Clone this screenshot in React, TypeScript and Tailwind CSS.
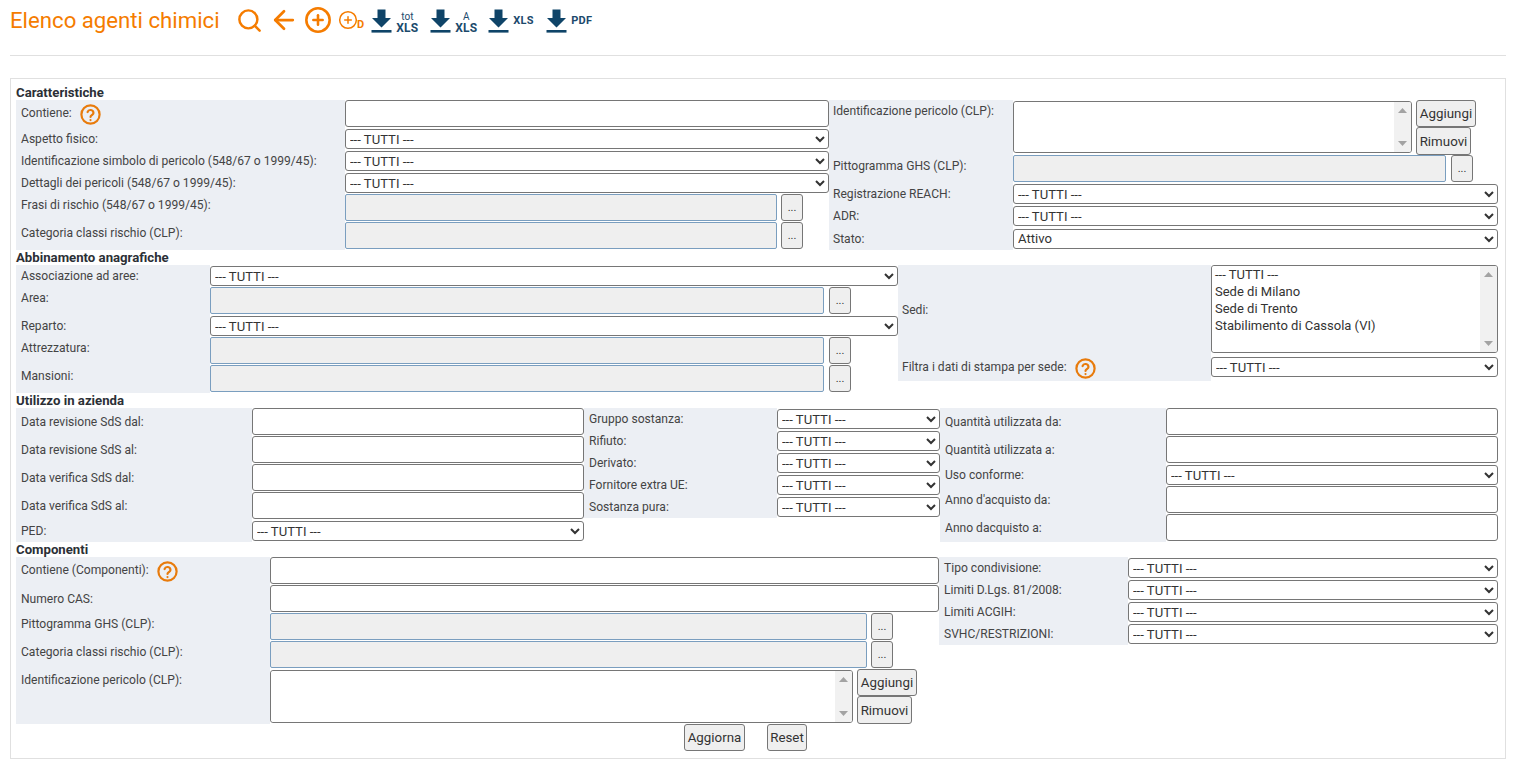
import React from "react";
import { Search, ArrowLeft, CirclePlus } from "lucide-react";

const inputCls = "block h-[27px] mb-[1px] border border-[#767676] rounded-[3px] bg-white";
const disabledCls = "block h-[27px] mb-[1px] border border-[#7a9ebf] rounded-[2px] bg-[#efefef]";
const selectCls = "block h-[20px] border border-[#767676] rounded-[3px] bg-white text-[#333] text-[13.1px] leading-[16px] pl-0";
const btnCls = "block bg-[#efefef] border border-[#767676] rounded-[3px] text-[#333] text-[13.33px] leading-[15px] p-0";

function Help() {
  return (
    <svg width="21" height="21" viewBox="0 0 24 24" fill="none" stroke="#e87b0c" strokeWidth="2.5" strokeLinecap="round" strokeLinejoin="round" className="shrink-0">
      <circle cx="12" cy="12" r="10.4" />
      <path d="M8.6 9.2a3.5 3.5 0 0 1 6.8 1c0 2.3-3.4 2.8-3.4 4.6" />
      <path d="M12 18.4h.01" />
    </svg>
  );
}

function Row({ h, lw, label, top, help, tight, children }: { h: string; lw: string; label: string; top?: boolean; help?: boolean; tight?: boolean; children: React.ReactNode }) {
  return (
    <div className={`flex ${h}`}>
      <div className={`${lw} shrink-0 bg-[#eceff4] ${tight ? "pl-[4px]" : "pl-[5px]"} text-[#444] text-[12.08px] leading-[14px] flex gap-[8px] ${top ? "items-start pt-[4px]" : "items-center"}`}>
        <span className={help ? "mb-[2px]" : ""}>{label}</span>
        {help && <Help />}
      </div>
      <div className="flex items-center min-w-0">{children}</div>
    </div>
  );
}

function Sel({ w, v = "--- TUTTI ---" }: { w: string; v?: string }) {
  return (
    <select className={`${selectCls} ${w}`} defaultValue={v}>
      <option>{v}</option>
    </select>
  );
}

function Dots() {
  return <button className={`${btnCls} w-[22px] h-[27px] mb-[1px] !text-[11px]`}>...</button>;
}

function Heading({ children }: { children: React.ReactNode }) {
  return <div className="h-[15px] text-[13.2px] leading-[15px] font-bold text-[#2b2f36]">{children}</div>;
}

function ScrollBar() {
  return (
    <div className="w-[17px] shrink-0 bg-[#f1f1f1] flex flex-col justify-between items-center py-[6px] rounded-r-[2px]">
      <svg width="9" height="5" viewBox="0 0 9 5" fill="#a3a3a3"><path d="M4.5 0 9 5H0z" /></svg>
      <svg width="9" height="5" viewBox="0 0 9 5" fill="#a3a3a3"><path d="M0 0h9L4.5 5z" /></svg>
    </div>
  );
}

function TextBox({ size }: { size: string }) {
  return (
    <div className={`flex border border-[#767676] rounded-[3px] bg-white ${size}`}>
      <textarea className="flex-1 min-w-0 resize-none outline-none bg-white rounded-l-[3px]" />
      <ScrollBar />
    </div>
  );
}

function Download({ top, bottom, small, w }: { top?: string; bottom: string; small?: boolean; w: string }) {
  return (
    <div className={`flex items-center mt-[2px] ${w}`}>
      <svg width="21" height="24" viewBox="0 0 21 24" className="shrink-0" fill="#0f4468">
        <path d="M6.5 0.5h8v8.5h5.5l-9.5 9.5-9.5-9.5h5.5z" />
        <rect x="0.5" y="21" width="20" height="2.6" />
      </svg>
      <div className={`flex flex-col items-center text-[#1c4a6c] ml-[4px] ${small ? "" : "mt-[3px]"}`}>
        {top && <span className="text-[10px] leading-[11px]">{top}</span>}
        <span className={`font-bold tracking-[0.3px] ${small ? "text-[11px] leading-[12px]" : "text-[12px] leading-[13px]"}`}>{bottom}</span>
      </div>
    </div>
  );
}

export default function App() {
  return (
    <div className="bg-white min-h-[763px] pl-[10px] pr-[9px] text-[12px]" style={{ fontFamily: "Roboto, 'Liberation Sans', sans-serif" }}>
      <div className="h-[56px] border-b border-[#e0e0e0] flex items-start pt-[7px]">
        <div className="text-[22.2px] leading-[26px] text-[#f57c00] w-[226px]">Elenco agenti chimici</div>
        <div className="flex items-center h-[26px]">
          <Search size={27} strokeWidth={2.2} color="#f57c00" />
          <ArrowLeft size={30} strokeWidth={2.2} color="#f57c00" className="ml-[6px]" />
          <CirclePlus size={28} strokeWidth={2.2} color="#f57c00" className="ml-[5px]" />
          <div className="flex items-end ml-[6px] text-[#f57c00]">
            <CirclePlus size={20} strokeWidth={1.8} color="#f57c00" />
            <span className="font-bold text-[11px] leading-[10px] -ml-[1px]">D</span>
          </div>
          <div className="ml-[7px] flex items-center">
            <Download top="tot" bottom="XLS" w="w-[59px]" />
            <Download top="A" bottom="XLS" w="w-[58px]" />
            <Download bottom="XLS" small w="w-[58px]" />
            <Download bottom="PDF" small w="w-[58px]" />
          </div>
        </div>
      </div>

      <div className="mt-[22px] border border-[#e0e0e0] pl-[5px] pt-[6px] pb-[7px] h-[681px]">
        <Heading>Caratteristiche</Heading>
        <div className="flex">
          <div className="w-[813px]">
            <Row h="h-[28px]" lw="w-[329px]" label="Contiene:" help><input className={`${inputCls} w-[484px]`} /></Row>
            <Row h="h-[22px]" lw="w-[329px]" label="Aspetto fisico:"><Sel w="w-[484px]" /></Row>
            <Row h="h-[22px]" lw="w-[329px]" label="Identificazione simbolo di pericolo (548/67 o 1999/45):"><Sel w="w-[484px]" /></Row>
            <Row h="h-[22px]" lw="w-[329px]" label="Dettagli dei pericoli (548/67 o 1999/45):"><Sel w="w-[484px]" /></Row>
            <Row h="h-[28px]" lw="w-[329px]" label="Frasi di rischio (548/67 o 1999/45):" top>
              <input disabled className={`${disabledCls} w-[432px]`} /><div className="ml-[4px]"><Dots /></div>
            </Row>
            <Row h="h-[28px]" lw="w-[329px]" label="Categoria classi rischio (CLP):" top>
              <input disabled className={`${disabledCls} w-[432px]`} /><div className="ml-[4px]"><Dots /></div>
            </Row>
          </div>
          <div>
            <Row tight h="h-[55px]" lw="w-[184px]" label="Identificazione pericolo (CLP):" top>
              <TextBox size="w-[399px] h-[52px] mb-[1px]" />
              <div className="ml-[4px] flex flex-col">
                <button className={`${btnCls} w-[60px] h-[27px]`}>Aggiungi</button>
                <button className={`${btnCls} w-[55px] h-[28px]`}>Rimuovi</button>
              </div>
            </Row>
            <Row tight h="h-[28px]" lw="w-[184px]" label="Pittogramma GHS (CLP):" top>
              <input disabled className={`${disabledCls} w-[433px]`} /><div className="ml-[5px]"><Dots /></div>
            </Row>
            <Row tight h="h-[22px]" lw="w-[184px]" label="Registrazione REACH:"><Sel w="w-[485px]" /></Row>
            <Row tight h="h-[22px]" lw="w-[184px]" label="ADR:"><Sel w="w-[485px]" /></Row>
            <Row tight h="h-[23px]" lw="w-[184px]" label="Stato:"><Sel w="w-[485px]" v="Attivo" /></Row>
          </div>
        </div>

        <Heading>Abbinamento anagrafiche</Heading>
        <div className="flex items-start">
          <div className="w-[882px]">
            <Row h="h-[22px]" lw="w-[194px]" label="Associazione ad aree:"><Sel w="w-[688px]" /></Row>
            <Row h="h-[28px]" lw="w-[194px]" label="Area:" top>
              <input disabled className={`${disabledCls} w-[614px]`} /><div className="ml-[5px]"><Dots /></div>
            </Row>
            <Row h="h-[22px]" lw="w-[194px]" label="Reparto:"><Sel w="w-[688px]" /></Row>
            <Row h="h-[28px]" lw="w-[194px]" label="Attrezzatura:" top>
              <input disabled className={`${disabledCls} w-[614px]`} /><div className="ml-[5px]"><Dots /></div>
            </Row>
            <Row h="h-[28px]" lw="w-[194px]" label="Mansioni:" top>
              <input disabled className={`${disabledCls} w-[614px]`} /><div className="ml-[5px]"><Dots /></div>
            </Row>
          </div>
          <div>
            <Row tight h="h-[90px]" lw="w-[313px]" label="Sedi:">
              <div className="h-[90px] pb-[2px]">
                <div className="flex w-[287px] h-[88px] border border-[#767676] rounded-[3px] bg-white">
                  <select multiple size={5} className="block flex-1 min-w-0 h-full pt-[1px] outline-none bg-white rounded-l-[3px] text-[#333] text-[13px] leading-[17px] overflow-hidden">
                    <option className="px-[3px] py-0 h-[17px]">--- TUTTI ---</option>
                    <option className="px-[3px] py-0 h-[17px]">Sede di Milano</option>
                    <option className="px-[3px] py-0 h-[17px]">Sede di Trento</option>
                    <option className="px-[3px] py-0 h-[17px]">Stabilimento di Cassola (VI)</option>
                  </select>
                  <ScrollBar />
                </div>
              </div>
            </Row>
            <Row tight h="h-[26px]" lw="w-[313px]" label="Filtra i dati di stampa per sede:" help>
              <div className="pb-[2px]"><Sel w="w-[287px]" /></div>
            </Row>
          </div>
        </div>

        <Heading>Utilizzo in azienda</Heading>
        <div className="flex items-start">
          <div className="w-[568px]">
            <Row h="h-[28px]" lw="w-[236px]" label="Data revisione SdS dal:"><input className={`${inputCls} w-[332px]`} /></Row>
            <Row h="h-[28px]" lw="w-[236px]" label="Data revisione SdS al:"><input className={`${inputCls} w-[332px]`} /></Row>
            <Row h="h-[28px]" lw="w-[236px]" label="Data verifica SdS dal:"><input className={`${inputCls} w-[332px]`} /></Row>
            <Row h="h-[28px]" lw="w-[236px]" label="Data verifica SdS al:"><input className={`${inputCls} w-[332px]`} /></Row>
            <Row h="h-[22px]" lw="w-[236px]" label="PED:"><Sel w="w-[332px]" /></Row>
          </div>
          <div className="w-[356px]">
            <Row h="h-[22px]" lw="w-[193px]" label="Gruppo sostanza:"><Sel w="w-[163px]" /></Row>
            <Row h="h-[22px]" lw="w-[193px]" label="Rifiuto:"><Sel w="w-[163px]" /></Row>
            <Row h="h-[22px]" lw="w-[193px]" label="Derivato:"><Sel w="w-[163px]" /></Row>
            <Row h="h-[22px]" lw="w-[193px]" label="Fornitore extra UE:"><Sel w="w-[163px]" /></Row>
            <Row h="h-[22px]" lw="w-[193px]" label="Sostanza pura:"><Sel w="w-[163px]" /></Row>
          </div>
          <div>
            <Row h="h-[28px]" lw="w-[226px]" label="Quantità utilizzata da:"><input className={`${inputCls} w-[332px]`} /></Row>
            <Row h="h-[28px]" lw="w-[226px]" label="Quantità utilizzata a:"><input className={`${inputCls} w-[332px]`} /></Row>
            <Row h="h-[22px]" lw="w-[226px]" label="Uso conforme:"><Sel w="w-[332px]" /></Row>
            <Row h="h-[28px]" lw="w-[226px]" label="Anno d'acquisto da:"><input className={`${inputCls} w-[332px]`} /></Row>
            <Row h="h-[28px]" lw="w-[226px]" label="Anno dacquisto a:"><input className={`${inputCls} w-[332px]`} /></Row>
          </div>
        </div>

        <Heading>Componenti</Heading>
        <div className="flex items-start">
          <div className="w-[923px]">
            <Row h="h-[28px]" lw="w-[254px]" label="Contiene (Componenti):" help><input className={`${inputCls} w-[669px]`} /></Row>
            <Row h="h-[28px]" lw="w-[254px]" label="Numero CAS:"><input className={`${inputCls} w-[669px]`} /></Row>
            <Row h="h-[28px]" lw="w-[254px]" label="Pittogramma GHS (CLP):" top>
              <input disabled className={`${disabledCls} w-[597px]`} /><div className="ml-[4px]"><Dots /></div>
            </Row>
            <Row h="h-[28px]" lw="w-[254px]" label="Categoria classi rischio (CLP):" top>
              <input disabled className={`${disabledCls} w-[597px]`} /><div className="ml-[4px]"><Dots /></div>
            </Row>
            <Row h="h-[55px]" lw="w-[254px]" label="Identificazione pericolo (CLP):" top>
              <TextBox size="w-[583px] h-[53px]" />
              <div className="ml-[4px] flex flex-col">
                <button className={`${btnCls} w-[60px] h-[27px]`}>Aggiungi</button>
                <button className={`${btnCls} w-[55px] h-[28px]`}>Rimuovi</button>
              </div>
            </Row>
          </div>
          <div>
            <Row h="h-[22px]" lw="w-[189px]" label="Tipo condivisione:"><Sel w="w-[370px]" /></Row>
            <Row h="h-[22px]" lw="w-[189px]" label="Limiti D.Lgs. 81/2008:"><Sel w="w-[370px]" /></Row>
            <Row h="h-[22px]" lw="w-[189px]" label="Limiti ACGIH:"><Sel w="w-[370px]" /></Row>
            <Row h="h-[22px]" lw="w-[189px]" label="SVHC/RESTRIZIONI:"><Sel w="w-[370px]" /></Row>
          </div>
        </div>

        <div className="flex pl-[668px] gap-[22px]">
          <button className={`${btnCls} w-[61px] h-[27px]`}>Aggiorna</button>
          <button className={`${btnCls} w-[40px] h-[27px]`}>Reset</button>
        </div>
      </div>
    </div>
  );
}
